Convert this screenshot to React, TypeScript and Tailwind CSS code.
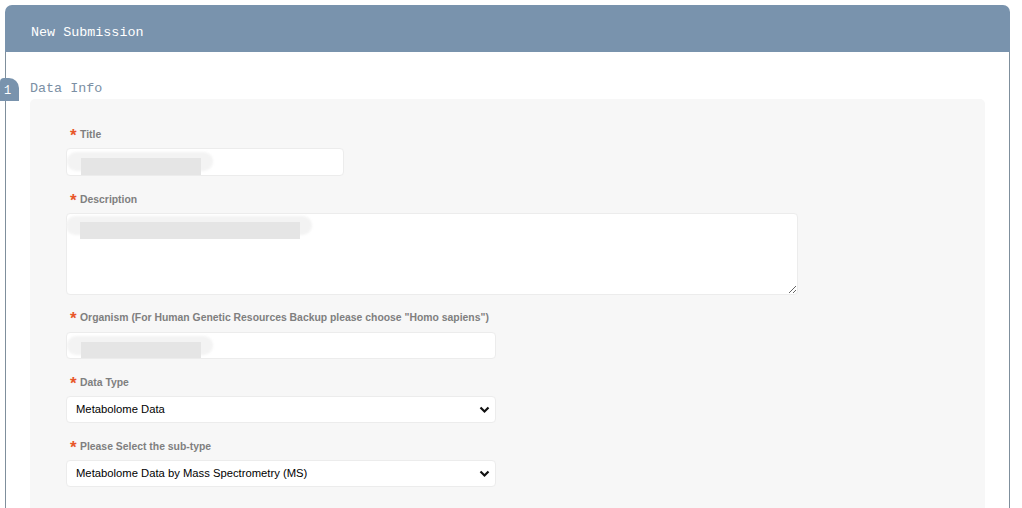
import { ReactNode } from "react"

const mono = { fontFamily: '"Liberation Mono", "DejaVu Sans Mono", monospace' }

function Label({ children }: { children: ReactNode }) {
  return (
    <div className="ml-[4px] flex h-[12px] items-center text-[10.4px] font-bold leading-none text-[#7f7f7f]">
      <span className="relative top-[2px] w-[10px] text-[17px] font-bold leading-[12px] text-[#e8562a]">*</span>
      <span className="relative top-[1px]">{children}</span>
    </div>
  )
}

function Redacted({ w }: { w: number }) {
  return (
    <div className="relative h-full">
      <div className="absolute left-0 top-[3px] h-[19px] rounded-full bg-[#f3f3f3] blur-[1px]" style={{ width: w + 26 }} />
      <div className="absolute left-[14px] top-[9px] h-[17px] bg-[#e5e5e5] blur-[0.5px]" style={{ width: w }} />
    </div>
  )
}

function Chevron() {
  return (
    <svg width="11" height="8" viewBox="0 0 11 8" className="absolute right-[5px] top-[9px]">
      <path d="M1.5 1.5 L5.5 5.5 L9.5 1.5" fill="none" stroke="#111" strokeWidth="2.2" />
    </svg>
  )
}

function Select({ value }: { value: string }) {
  return (
    <div className="relative flex h-[27px] w-[430px] items-center rounded-[4px] border border-[#ececec] bg-white">
      <div className="pl-[9px] text-[11.25px] leading-none text-black">{value}</div>
      <Chevron />
    </div>
  )
}

export default function App() {
  return (
    <div className="h-[508px] overflow-hidden bg-white pl-[5px] pt-[5px]" style={{ fontFamily: '"Liberation Sans", Arial, sans-serif' }}>
      <div className="w-[1005px]">
        <div className="flex h-[47px] items-center rounded-t-[7px] bg-[#7993ad] pl-[26px] pt-[10px]">
          <span className="text-[13.4px] text-white" style={mono}>New Submission</span>
        </div>
        <div className="relative border-x border-[#7f8f9c] pb-[40px]">
          <div className="absolute -left-[6px] top-[26px] flex h-[23px] w-[19px] items-center rounded-tl-[4px] rounded-tr-[10px] bg-[#7993ad] pl-[4px] pt-[3px] text-[12px] text-white" style={mono}>
            1
          </div>
          <div className="pl-[24px] pt-[28px] text-[13.4px] leading-[18px] text-[#7b8fa4]" style={mono}>
            Data Info
          </div>
          <div className="mx-[24px] mt-[1px] rounded-t-[5px] bg-[#f7f7f7] pb-[30px] pl-[36px] pt-[29px]">
            <Label>Title</Label>
            <div className="mt-[8px] h-[28px] w-[278px] overflow-hidden rounded-[4px] border border-[#ececec] bg-white">
              <Redacted w={120} />
            </div>
            <div className="mt-[17px]">
              <Label>Description</Label>
            </div>
            <div className="relative mt-[8px] w-[732px]">
              <textarea readOnly className="block h-[82px] w-full rounded-[4px] border border-[#ececec] bg-white" />
              <div className="pointer-events-none absolute inset-x-0 top-0 h-[30px] overflow-hidden">
                <Redacted w={220} />
              </div>
            </div>
            <div className="mt-[16px]">
              <Label>Organism (For Human Genetic Resources Backup please choose "Homo sapiens")</Label>
            </div>
            <div className="mt-[9px] h-[27px] w-[430px] overflow-hidden rounded-[4px] border border-[#ececec] bg-white">
              <Redacted w={120} />
            </div>
            <div className="mt-[17px]">
              <Label>Data Type</Label>
            </div>
            <div className="mt-[8px]">
              <Select value="Metabolome Data" />
            </div>
            <div className="mt-[17px]">
              <Label>Please Select the sub-type</Label>
            </div>
            <div className="mt-[8px]">
              <Select value="Metabolome Data by Mass Spectrometry (MS)" />
            </div>
          </div>
        </div>
      </div>
    </div>
  )
}
